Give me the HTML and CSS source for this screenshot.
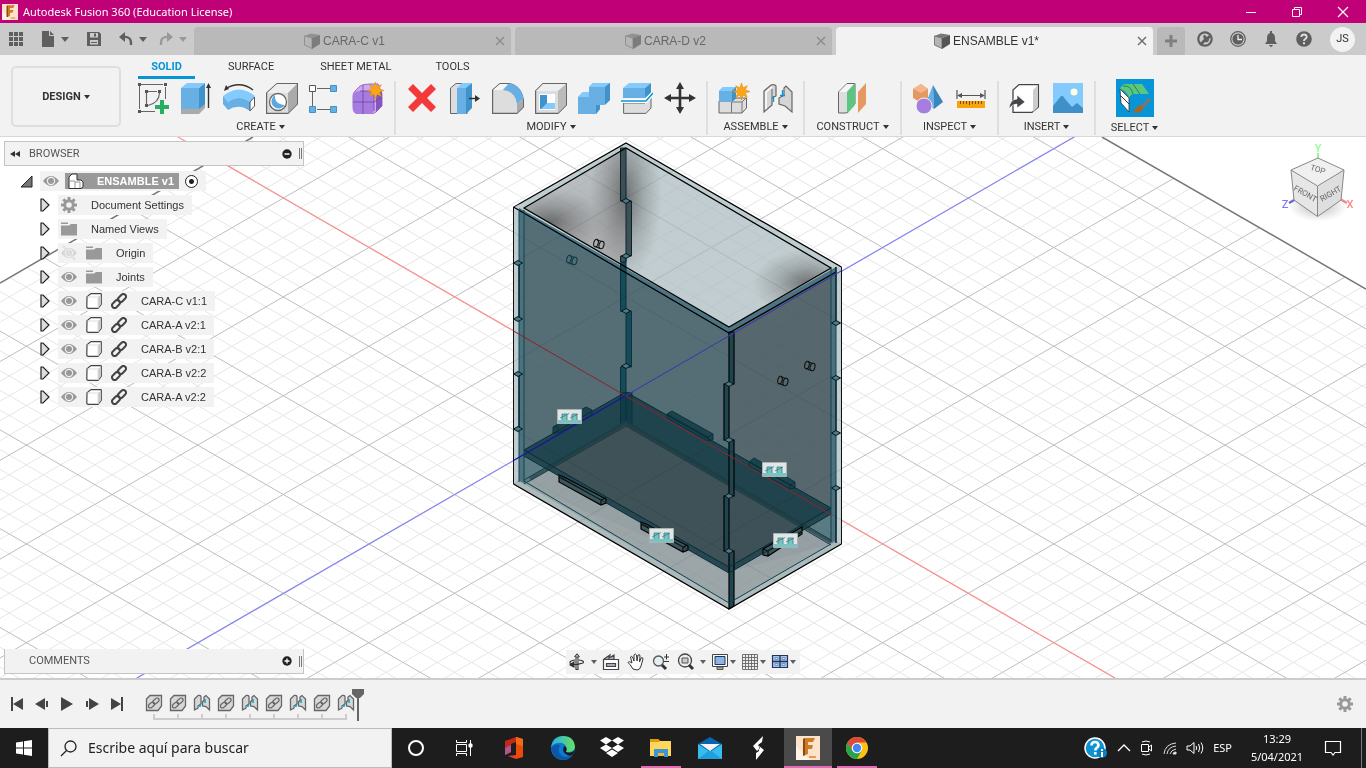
FILE: index.html
```html
<!DOCTYPE html>
<html lang="es">
<head>
<meta charset="utf-8">
<title>Autodesk Fusion 360 (Education License)</title>
<link rel="stylesheet" href="styles.css">
</head>
<body>
<svg class="defs" aria-hidden="true">
  <symbol id="tabcube" viewBox="0 0 16 16"><path d="M.5 3 8 5V15.500L.5 12Z" fill="#b4b4b4" stroke="#666" stroke-width=".8"/><path d="M0 3 7 .5 16 2 8 5Z" fill="#777"/><path d="M8 5 16 2V11L8 16Z" fill="#555"/></symbol>
  <symbol id="close" viewBox="0 0 10 10"><path d="M1 1 9 9M9 1 1 9" stroke="#707070" stroke-width="1.500"/></symbol>
  <symbol id="eye" viewBox="0 0 16 16"><path d="M0 8Q8-2 16 8Q8 18 0 8Z" fill="#999"/><circle cx="8" cy="8" r="3.600" fill="none" stroke="#f2f2f2" stroke-width="1.200"/><circle cx="8" cy="8" r="1.700" fill="#999"/></symbol>
  <symbol id="folder" viewBox="0 0 16 16"><path d="M0 1.500H7V3H0ZM0 4.500H8L10 3H16V14.500H0Z" fill="#999"/></symbol>
  <symbol id="gear" viewBox="0 0 16 16"><circle cx="8" cy="8" r="4.300" fill="none" stroke="#999" stroke-width="3"/><path d="M8 0V3M8 13V16M0 8H3M13 8H16M2.300 2.300 4.500 4.500M11.500 11.500 13.700 13.700M2.300 13.700 4.500 11.500M11.500 4.500 13.700 2.300" stroke="#999" stroke-width="3"/></symbol>
  <symbol id="cube" viewBox="0 0 16 16"><path d="M1 4Q1 3 2 3L5 .6H14.500Q15.500 .6 15.500 2V11L12 15.400H2.500Q.8 15.400.8 14Z" fill="#fff" stroke="#444" stroke-width="1.200"/><path d="M12 4 15.200 1.500V11L12 15Z" fill="#c9c9cc"/><path d="M1.500 4H12V15" fill="none" stroke="#ddd"/></symbol>
  <symbol id="link" viewBox="0 0 16 16"><g fill="none" stroke="#444" stroke-width="2"><rect x="-4.500" y="-2.600" width="9" height="5.200" rx="2.600" transform="translate(11 5) rotate(-45)"/><rect x="-4.500" y="-2.600" width="9" height="5.200" rx="2.600" transform="translate(5 11) rotate(-45)"/></g></symbol>
  <symbol id="open" viewBox="0 0 10 14"><path d="M1 1H3L9 7 3 13H1Z" fill="#ddd" stroke="#222" stroke-width="1.200"/></symbol>
  <symbol id="tl-link" viewBox="0 0 18 18"><path d="M1.500 5 5 1.500H16.500V12L13 16.500H1.500Z" fill="#d7d7d7" stroke="#666" stroke-width="1.300"/><g fill="none" stroke="#666" stroke-width="1.200"><rect x="-3.500" y="-2" width="7" height="4" rx="2" transform="translate(11 7) rotate(-40)"/><rect x="-3.500" y="-2" width="7" height="4" rx="2" transform="translate(6.500 11) rotate(-40)"/></g></symbol>
  <symbol id="tl-joint" viewBox="0 0 18 18"><path d="M1.500 16V5L5 1.500Q8 1 8 3V10L5 12V14ZM16.500 16V5L13 1.500 11 3V6L9.500 8V12L13 12.500Z" fill="#d7d7d7" stroke="#666" stroke-width="1.300"/><path d="M7 10V13M12 5V9" stroke="#0696d7" stroke-width="1.500"/></symbol>
  <symbol id="joint" viewBox="0 0 32 32"><path d="M3 30V9L10 3Q14 2 15 4V14L11 16V23Z" fill="#d5d5d5" stroke="#666" stroke-width="1.200"/><path d="M5 27V10L11 5" stroke="#fff" stroke-width="1.500" fill="none"/><path d="M11 7V16" stroke="#666"/><path d="M31 30V10L25 4 23 6V13L18 16V22L24 24Z" fill="#d5d5d5" stroke="#666" stroke-width="1.200"/><path d="M12.500 14V20M21.500 8V15M19 13.500H24" stroke="#0696d7" stroke-width="1.300"/></symbol>
  <symbol id="star" viewBox="0 0 16 16"><path d="M8 0 9.500 4.500 13.500 2.500 11.500 6.500 16 8 11.500 9.500 13.500 13.500 9.500 11.500 8 16 6.500 11.500 2.500 13.500 4.500 9.500 0 8 4.500 6.500 2.500 2.500 6.500 4.500Z" fill="#faa61a" stroke="#e08a00" stroke-width=".5"/></symbol>
  <symbol id="fusion" viewBox="0 0 24 24"><path d="M0 0H24V24H0Z" fill="#fde3cb"/><path d="M0 10 14 24H0Z" fill="#fff3e8"/><path d="M7 3 10 2H19L17 6H12V9H17L16 13H12V18L7 20Z" fill="#cf7c28"/><path d="M7 3 9 2V19L7 20Z" fill="#8c4a12"/><path d="M13 21H20" stroke="#e89b56" stroke-width="2"/></symbol>
</svg>

<header class="titlebar">
  <svg width="16" height="16"><use href="#fusion"/></svg>
  <h1>Autodesk Fusion 360 (Education License)</h1>
  <div class="wincontrols">
    <button aria-label="Minimize"><svg width="12" height="12"><path d="M1 6.500H11" stroke="#fff"/></svg></button>
    <button aria-label="Restore"><svg width="12" height="12" fill="none" stroke="#fff"><path d="M1.500 3.500H8.500V10.500H1.500ZM3.500 3V1.500H10.500V8.500H9"/></svg></button>
    <button aria-label="Close"><svg width="12" height="12"><path d="M1 1 11 11M11 1 1 11" stroke="#fff" stroke-width="1.200"/></svg></button>
  </div>
</header>

<nav class="docbar">
  <div class="quick">
    <button aria-label="Data panel"><svg width="16" height="16"><path d="M1 1H5V5H1ZM6 1H10V5H6ZM11 1H15V5H11ZM1 6H5V10H1ZM6 6H10V10H6ZM11 6H15V10H11ZM1 11H5V15H1ZM6 11H10V15H6ZM11 11H15V15H11Z" fill="#5f5f5f"/></svg></button>
    <button aria-label="File" class="menu"><svg width="14" height="16"><path d="M1 0H8V5H13V16H1ZM9 0 13 4H9Z" fill="#5f5f5f"/></svg></button>
    <button aria-label="Save"><svg width="16" height="16"><path d="M1 1H13L15 3V15H1Z" fill="#5f5f5f"/><path d="M4 2H12V6.500H4ZM4 9H12V13.500H4Z" fill="#cbcbcb"/><path d="M8 2.500H10V5.500H8ZM5 11H11V12H5Z" fill="#5f5f5f"/></svg></button>
    <button aria-label="Undo" class="menu"><svg width="14" height="14"><path d="M0 5 6 0V10Z" fill="#5f5f5f"/><path d="M4 5Q13 4 12 13" fill="none" stroke="#5f5f5f" stroke-width="2.200"/></svg></button>
    <button aria-label="Redo" class="menu faded"><svg width="14" height="14"><path d="M14 5 8 0V10Z" fill="#999"/><path d="M10 5Q1 4 2 13" fill="none" stroke="#999" stroke-width="2.200"/></svg></button>
  </div>
  <div class="doctabs">
    <div class="doctab"><a href="#c" class="name"><svg width="16" height="16"><use href="#tabcube"/></svg>CARA-C v1</a><button aria-label="Close CARA-C"><svg width="10" height="10"><use href="#close"/></svg></button></div>
    <div class="doctab"><a href="#d" class="name"><svg width="16" height="16"><use href="#tabcube"/></svg>CARA-D v2</a><button aria-label="Close CARA-D"><svg width="10" height="10"><use href="#close"/></svg></button></div>
    <div class="doctab active"><a href="#e" class="name"><svg width="16" height="16"><use href="#tabcube"/></svg>ENSAMBLE v1*</a><button aria-label="Close ENSAMBLE"><svg width="10" height="10"><use href="#close"/></svg></button></div>
  </div>
  <button class="newtab" aria-label="New tab"><svg width="14" height="14"><path d="M7 1V13M1 7H13" stroke="#808080" stroke-width="3"/></svg></button>
  <div class="account">
    <button aria-label="Extensions"><svg width="16" height="16"><circle cx="8" cy="8" r="6.700" fill="#cbcbcb" stroke="#5f5f5f" stroke-width="2.200"/><path d="M2 13 7 8Q5 4 8 4L10 6 12 4 14 6 12 8Q12 12 8 11L4 15Z" fill="#5f5f5f"/></svg></button>
    <button aria-label="Job status"><svg width="16" height="16"><circle cx="8" cy="8" r="7.300" fill="none" stroke="#5f5f5f" stroke-width="1.200"/><circle cx="8" cy="8" r="5.600" fill="#5f5f5f"/><path d="M8 4V8.500H12" fill="none" stroke="#eee" stroke-width="1.300"/></svg></button>
    <button aria-label="Notifications"><svg width="16" height="16"><path d="M7 0H9V2Q12 3 12 7V10L14 13H2L4 10V7Q4 3 7 2ZM6 14H10Q9 16 8 16T6 14Z" fill="#5f5f5f"/></svg></button>
    <button aria-label="Help"><svg width="16" height="16"><circle cx="8" cy="8" r="7.800" fill="#5f5f5f"/><path d="M5.300 6Q5.500 3.500 8 3.500T10.700 6Q10.700 7.300 9 8.200 8 8.800 8 10" fill="none" stroke="#ddd" stroke-width="1.900"/><path d="M7 11.200H9V13.200H7Z" fill="#ddd"/></svg></button>
    <button class="avatar">JS</button>
  </div>
</nav>

<section class="ribbon">
  <button class="workspace">DESIGN<i class="caret"></i></button>
  <div class="tools">
    <nav class="rtabs"><a href="#solid" class="on">SOLID</a><a href="#surface">SURFACE</a><a href="#sheet">SHEET METAL</a><a href="#tools">TOOLS</a></nav>
    <div class="groups">
      <div class="group">
        <div class="icons">
          <button aria-label="Create sketch"><svg width="32" height="32"><g fill="none" stroke="#666"><path d="M4 2.500H26M28.500 5V17M2.500 4V27M4 29.500H18" /><path d="M9.500 11V22M11 9.500H20M22.500 11Q22 21 11 23.500" stroke-width="1.200"/></g><path d="M1 1H4V4H1ZM27 1H30V4H27ZM1 28H4V31H1ZM8 8H11V11H8ZM21 8H24V11H21ZM8 22H11V25H8Z" fill="#555"/><path d="M23 18H27V23H32V27H27V32H23V27H18V23H23Z" fill="#27ae60"/></svg></button>
          <button aria-label="Extrude"><svg width="32" height="32"><path d="M1 26H19L25 21V26L19 32H1Z" fill="#aaa"/><path d="M1 6 7 1H25L19 6Z" fill="#83caff"/><path d="M1 6H19V27H1Z" fill="#68afe3"/><path d="M19 6 25 1V22L19 27Z" fill="#4092cb"/><path d="M28.500 5V26" stroke="#333" stroke-width="1.400"/><path d="M26 6 28.500 1 31 6Z" fill="#333"/></svg></button>
          <button aria-label="Revolve"><svg width="32" height="32"><path d="M2 7Q17-2 30 8" fill="none" stroke="#333" stroke-width="1.400"/><path d="M1 9 3 3 6 7Z" fill="#333"/><path d="M0 14Q16 1 32 14L27 20Q16 12 5 20Z" fill="#83caff"/><path d="M0 14 5 20Q16 12 27 20V29Q16 21 5 28L0 22Z" fill="#68afe3"/><path d="M27 20 31.500 15V24L27 29Z" fill="#fff" stroke="#555"/></svg></button>
          <button aria-label="Hole"><svg width="32" height="32"><path d="M.6 11 11 1.600H31.400V22L22 31.400H.6Z" fill="#ddd" stroke="#666" stroke-width="1.200"/><path d="M1 11 11 2H31L22 11Z" fill="#eee"/><path d="M22 11 31 2V22L22 31Z" fill="#aaa"/><circle cx="12" cy="20" r="8.500" fill="#fff" stroke="#666" stroke-width="1.300"/><path d="M9 13Q8 22 19 23A7.300 7.300 0 1 1 9 13Z" fill="#5ba7e0"/></svg></button>
          <button aria-label="Pattern"><svg width="32" height="32"><path d="M8 6.500H22M3.500 10V24M8 27.500H22" stroke="#666"/><path d="M.5 3.500H6.500V9.500H.5Z" fill="#fff" stroke="#555"/><path d="M21.500 3.500H27.500V9.500H21.500ZM.5 24.500H6.500V30.500H.5ZM21.500 24.500H27.500V30.500H21.500Z" fill="#68afe3" stroke="#4092cb"/></svg></button>
          <button aria-label="Create form"><svg width="32" height="32"><path d="M1 14Q1 11 3 9L8 4Q11 2 18 2H26L30 12V24L24 30Q22 32 18 32H7Q1 32 1 25Z" fill="#d0a9f5" stroke="#8556bd" stroke-width=".8"/><path d="M1 14Q2 9 8 9H17Q22 9 22 14V26Q22 32 17 32H7Q1 32 1 26Z" fill="#a87be3"/><path d="M24 13 30 9V24L24 30Z" fill="#8556bd"/><path d="M11 3V32M1 20H22L30 15M8 9H17Q22 9 22 14V29" stroke="#6d4995" stroke-width=".8" fill="none"/><use href="#star" x="15" y="0" width="17" height="17"/></svg></button>
        </div><button class="label">CREATE<i class="caret"></i></button>
      </div>
      <div class="group">
        <div class="icons">
          <button aria-label="Delete"><svg width="32" height="32"><path d="M2 7 7 2 16 11 25 2 30 7 21 16 30 25 25 30 16 21 7 30 2 25 11 16Z" fill="#f33a3a"/></svg></button>
          <button aria-label="Press pull"><svg width="32" height="32"><path d="M1.500 6 7 1.500H18V31.500H1.500Z" fill="#ddd" stroke="#666"/><path d="M8 6 13 1H23L18 6Z" fill="#83caff"/><path d="M8 6H17V32H8Z" fill="#68afe3"/><path d="M17 6 23 1V26L17 32Z" fill="#4092cb"/><path d="M20 16.500H27" stroke="#333" stroke-width="1.500"/><path d="M26 13 31 16.500 26 20Z" fill="#333"/></svg></button>
          <button aria-label="Fillet"><svg width="32" height="32"><path d="M.6 8 8 1.600H17Q29 4 31.400 18V25L25 31.400H.6Z" fill="#ddd" stroke="#666" stroke-width="1.200"/><path d="M1 8 8 2H16L10 8Z" fill="#f6f6f6"/><path d="M11 8 17 1.600Q30 4 31.500 17L25 22Q23 9 11 8Z" fill="#68afe3"/><path d="M25 22 31 18V25L25 31Z" fill="#aaa"/></svg></button>
          <button aria-label="Shell"><svg width="32" height="32"><path d="M.6 9 8 1.600H31.400V23L23 31.400H.6Z" fill="#ddd" stroke="#666" stroke-width="1.200"/><path d="M1 9 8 2H31L23 9Z" fill="#eee"/><path d="M23 9 31 2V23L23 31Z" fill="#bbb"/><path d="M4 12H20V28H4Z" fill="#fff"/><path d="M5 13H12V27H5Z" fill="#4092cb"/><path d="M6 27 12 21H20V27Z" fill="#83caff"/></svg></button>
          <button aria-label="Combine"><svg width="32" height="32"><path d="M0 15 5 10H11V5L15 1H32V18L26 23H22V27L18 32H0Z" fill="#68afe3"/><path d="M0 15 5 10H11V15ZM11 5 15 1H32L27 5Z" fill="#83caff"/><path d="M27 5 32 1V18L27 23ZM18 23H22V27L18 32Z" fill="#4092cb"/></svg></button>
          <button aria-label="Split"><svg width="32" height="32"><path d="M2.600 21H24L30 15V26L25 31.400H2.600Z" fill="#ddd" stroke="#666"/><path d="M2 6 8 1H30L24 6Z" fill="#83caff"/><path d="M2 6H24V16H2Z" fill="#68afe3"/><path d="M24 6 30 1V11L24 16Z" fill="#4092cb"/><path d="M0 19H25L32 11" fill="none" stroke="#fff" stroke-width="4"/><path d="M0 19H25L32 11" fill="none" stroke="#0696d7" stroke-width="1.500"/></svg></button>
          <button aria-label="Move"><svg width="32" height="32"><path d="M16 0 20 7H17.300V14.700H25V12L32 16 25 20V17.300H17.300V25H20L16 32 12 25H14.700V17.300H7V20L0 16 7 12V14.700H14.700V7H12Z" fill="#333"/></svg></button>
        </div><button class="label">MODIFY<i class="caret"></i></button>
      </div>
      <div class="group">
        <div class="icons">
          <button aria-label="New component"><svg width="32" height="32"><path d="M1 19H14L18 16H28.500V26L24 31H1Z" fill="#ddd" stroke="#666"/><path d="M13.500 20V31M24 20V31M13 20H24L28 16" stroke="#777" fill="none"/><path d="M1 9 5 5H18V16L14 20H1Z" fill="#68afe3"/><path d="M1 9 5 5H18L14 9Z" fill="#83caff"/><path d="M14 9 18 5V16L14 20Z" fill="#4092cb"/><use href="#star" x="15" y="1" width="17" height="17"/></svg></button>
          <button aria-label="Joint"><svg width="32" height="32"><use href="#joint"/></svg></button>
        </div><button class="label">ASSEMBLE<i class="caret"></i></button>
      </div>
      <div class="group">
        <div class="icons">
          <button aria-label="Offset plane"><svg width="32" height="32"><path d="M1.500 10 10 1.500H18V22L9 31H1.500Z" fill="#ddd" stroke="#666"/><path d="M2 10 10 2H17L9 10Z" fill="#f6f6f6"/><path d="M10 10 18 1V23L10 32Z" fill="#5bc67f"/><path d="M21 10 29 1V22L21 31Z" fill="#e59862"/></svg></button>
        </div><button class="label">CONSTRUCT<i class="caret"></i></button>
      </div>
      <div class="group">
        <div class="icons">
          <button aria-label="Analysis"><svg width="32" height="32"><path d="M1 7 9 2 16 7V16L8 20 1 16Z" fill="#e59862"/><path d="M1 7 9 2 16 7 9 11Z" fill="#f5b68c"/><path d="M21 3 14 21 22 27Z" fill="#68afe3"/><path d="M21 3 31 20 22 27Z" fill="#3b85bd"/><circle cx="12" cy="24" r="8" fill="#a87de0" stroke="#f2f2f2"/></svg></button>
          <button aria-label="Measure"><svg width="32" height="32"><path d="M2 8V17M30 8V17M4 13.500H28" stroke="#555" stroke-width="1.200"/><path d="M2 13.500 7 11V16ZM30 13.500 25 11V16Z" fill="#555"/><path d="M2 19H30V26H2Z" fill="#f9a30c"/><path d="M5.500 19V22M8.500 19V22M11.500 19V22M14.500 19V23M17.500 19V22M20.500 19V22M23.500 19V22M26.500 19V22" stroke="#7b5000"/></svg></button>
        </div><button class="label">INSPECT<i class="caret"></i></button>
      </div>
      <div class="group">
        <div class="icons">
          <button aria-label="Insert derive"><svg width="32" height="32"><path d="M4 8 10 2.600H29.400V25L23 30.400H4Z" fill="#fff" stroke="#444" stroke-width="1.300"/><path d="M24 8 29 3V25L24 30Z" fill="#ccc"/><path d="M0 27Q1 17 8 17V13L16 20 8 26V22Q3 22 0 27Z" fill="#45464c" stroke="#fff" stroke-width=".6"/></svg></button>
          <button aria-label="Canvas"><svg width="32" height="32"><path d="M1 1H31V31H1Z" fill="#83caff"/><path d="M1 24 9 14Q11 13 13 17L20 25 25 21 31 26V31H1Z" fill="#3f90c9"/><circle cx="22" cy="10" r="3.500" fill="#fffde0"/></svg></button>
        </div><button class="label">INSERT<i class="caret"></i></button>
      </div>
      <div class="group last">
        <div class="icons">
          <button aria-label="Select" class="selected"><svg width="32" height="32"><path d="M1 7 10 16V30L2 21Z" fill="#fff" stroke="#333" stroke-width=".8"/><path d="M2 14 10 22" stroke="#333"/><path d="M1 7Q3 2 7 2H23L30 12H15Q12 12 10 16 8 9 1 7Z" fill="#5bc67f"/><path d="M14 2 21 12M4 4Q12 3 14 12" stroke="#22874a" fill="none"/><path d="M31 17 23 25" stroke="#777" stroke-width="3.500"/><path d="M14 31Q17 24 21 23L25 26Q23 31 14 31Z" fill="#a0682c"/></svg></button>
        </div><button class="label">SELECT<i class="caret"></i></button>
      </div>
    </div>
  </div>
</section>

<main class="canvas">
  <svg class="scene" viewBox="0 137 1366 541" preserveAspectRatio="xMidYMid slice" role="img" aria-label="Box assembly">
    <defs>
      <clipPath id="plane"><path d="M0 283 474 9 627 -137 1366 289V700H0Z"/></clipPath>
      <clipPath id="body"><path d="M513.500 207 626 143 841.500 267V544L729 609 513.500 484Z"/></clipPath>
      <linearGradient id="lw" gradientUnits="userSpaceOnUse" x1="560" y1="180" x2="590" y2="235"><stop offset="0" stop-color="#b9bec1"/><stop offset="1" stop-color="#adafb1"/></linearGradient>
      <radialGradient id="dk"><stop offset="0" stop-color="#4c4c4c" stop-opacity=".7"/><stop offset=".5" stop-color="#555" stop-opacity=".3"/><stop offset="1" stop-color="#666" stop-opacity="0"/></radialGradient>
      <clipPath id="mouth"><path d="M524 208 626 148 831 268 729 327Z"/></clipPath>
      <symbol id="tag" viewBox="0 0 25 15"><path d="M.5.500H24.500V14.500H.5Z" fill="#e0e5e6" stroke="#aab2b4"/><path d="M1 11H5V5H10V11H15V5H20V11H24V14H1Z" fill="#79c3c3"/><path d="M5 11V5H10V11M15 11V5H20V11M3 9 12 4.500M13 9 21 5" fill="none" stroke="#2a7479" stroke-width=".7"/></symbol>
      <symbol id="pin" viewBox="0 0 14 12"><g fill="none" stroke="currentColor" stroke-width="1.100"><ellipse cx="4" cy="5" rx="2.200" ry="3.800" transform="rotate(15 4 5)"/><ellipse cx="9.500" cy="7" rx="2.400" ry="3.800" transform="rotate(15 9.500 7)"/><path d="M5 2 10 3.500M3 8.500 8 10.500"/></g></symbol>
      <symbol id="dia" viewBox="0 0 10 6"><path d="M.5 3 5 .5 9.500 3 5 5.500Z" fill="#4e7985" stroke="#001a20"/></symbol>
    </defs>
    <g clip-path="url(#plane)"><path id="minor" class="minor"/><path id="major" class="major"/></g>
    <path d="M0 283 253 137M1102 137 1366 289" stroke="#777" stroke-width="1.500"/>
    <path d="M178 137 1115 678" stroke="#ff9191" stroke-width="1.200"/>
    <path d="M137 678 1075 136.500" stroke="#8888f6" stroke-width="1.200"/>

    <g fill-opacity=".95">
      <path d="M513.500 207 626 143 841.500 267V544L729 609 513.500 484Z" fill="#bccacf"/>
      <path d="M524 208 626 148V267Z" fill="url(#lw)"/>
      <path d="M626 148 831 268 729 327 626 267Z" fill="#c1ccd0"/>
    </g>
    <g clip-path="url(#mouth)">
      <ellipse cx="550" cy="222" rx="55" ry="34" fill="url(#dk)"/>
      <ellipse cx="626" cy="195" rx="36" ry="85" fill="url(#dk)"/>
      <ellipse cx="808" cy="283" rx="56" ry="34" fill="url(#dk)"/>
    </g>
    <g fill-opacity=".95">
      <path d="M519 208 729 330V572L519 482Z" fill="#4f6870"/>
      <path d="M729 330 836 269V543L729 572Z" fill="#506268"/>
      <path d="M524 450 626 392V424L548 469Z" fill="#1f434d"/>
      <path d="M626 392 831 508V514L804 528 626 425Z" fill="#1e414b"/>
      <path d="M548 469 626 424 804 528 729 570Z" fill="#3d5056"/>
      <path d="M513.500 484 519 480 524 483 548 469 729 572 804 528 836 545 841 544 729 609Z" fill="#9aa3a6"/>
      <path d="M519 450 548 469 524 484 519 481ZM836 509 804 528 836 546Z" fill="#5c7c85"/>
      <path d="M524 450 729 567 831 508V514L729 573 524 456Z" fill="#26464f"/>
      <path d="M513.500 484 519 481 729 603V609ZM729 603 836 541 841 544 729 609Z" fill="#aebabd"/>
    </g>
    <path d="M519 208 729 327 836 267V273L729 333 519 214Z" fill="#4c7482"/>
    <path d="M519 210H524V481H519ZM831 269H836V541H831Z" fill="#4b737f" fill-opacity=".85"/>
    <path d="M626 421 524 480M626 426 524 484M626 421 831 540M626 426 831 545" stroke="#0d434e"/>
    <path d="M626 424 530 479M626 424 831 542" stroke="#24383d" stroke-width="4" opacity=".6"/>
    <path d="M620.500 262H626V312H631.500V367H626V395H620.500V367H626V312H620.500Z" fill="#174b57"/>
    <path d="M626 392H632V424L626 421 620 424V392Z" fill="#113c46"/>
    <path d="M620.500 148H626V201H631.500V256H626V262H620.500V256H626V201H620.500Z" fill="#3f4f54" stroke="#06262e"/>
    <path d="M620.500 263V311H626V367H620.500V424M631.500 311V367H626M626 256V311H631.500M626 367V421M632 392V424" stroke="#06333e" fill="none"/>
    <g clip-path="url(#body)" class="veil"><use href="#minor"/><use href="#major"/><use href="#major"/></g>
    <path d="M729 332H734V384H729ZM724 384H729V440H724ZM729 440H734V496H729ZM724 496H729V551H724ZM729 551H734V606L729 609Z" fill="#1f4650" stroke="#000" stroke-width="1.200"/>

    <path d="M553 427 586 407 592 410V415L558 433H553ZM667 414 672 411 713 434V440L708 441 667 418ZM749 462 754 458 795 482V488L790 489 749 466Z" fill="#1d424c" stroke="#06333e"/>
    <path d="M558 432V427L553 427M667 414 708 437 713 434M708 437V441M749 462 790 485 795 482M790 485V489" fill="none" stroke="#06333e"/>
    <path d="M559 475 564 477 606 499V503L601 505 559 482ZM641 522 646 524 688 546V550L683 552 641 529ZM763 549 802 527V534L768 556 763 555Z" fill="#3f545a" stroke="#000" stroke-width="1.200"/>
    <path d="M559 477 601 500 606 498M601 500V505M641 524 683 547 688 545M683 547V552M763 549 768 551 802 532M768 551V556" fill="none" stroke="#000"/>
    <path d="M524 450 729 567 831 508M524 456 729 573 831 514M524 450 626 392 831 508" fill="none" stroke="#062d36"/>

    <g fill="none" stroke="#000" stroke-width="1.300">
      <path d="M519 204 626 143 841.500 267M513.500 484 729 609 841.500 544"/>
      <path d="M524 208 626 148 831 268 729 327ZM513.500 207 729 333 836 272"/>
      <path d="M519 263V318M519 374V429M836 267V322M836 378V433M836 488V543"/>
    </g>
    <path d="M519 204 513.500 207V484M841.500 267V544" fill="none" stroke="#111"/>
    <path d="M519 210V482M524 210V482M831 269V542M836 269V542M524 481 729 603 831 544" fill="none" stroke="#10434f"/>
    <use href="#dia" x="513" y="260" width="10" height="6"/><use href="#dia" x="513" y="316" width="10" height="6"/><use href="#dia" x="513" y="371" width="10" height="6"/><use href="#dia" x="513" y="426" width="10" height="6"/>
    <use href="#dia" x="831" y="320" width="10" height="6"/><use href="#dia" x="831" y="375" width="10" height="6"/><use href="#dia" x="831" y="430" width="10" height="6"/><use href="#dia" x="831" y="485" width="10" height="6"/>
    <use href="#dia" x="621" y="198" width="10" height="6"/><use href="#dia" x="621" y="253" width="10" height="6"/><use href="#dia" x="621" y="308" width="10" height="6"/><use href="#dia" x="621" y="363" width="10" height="6"/>
    <use href="#dia" x="724" y="381" width="10" height="6"/><use href="#dia" x="724" y="437" width="10" height="6"/><use href="#dia" x="724" y="493" width="10" height="6"/><use href="#dia" x="724" y="548" width="10" height="6"/>
    <path d="M513.500 331 831 514.500" stroke="#8e2630"/>
    <path d="M513.500 460.500 626 395.500" stroke="#1515a0" stroke-width="1.200"/><path d="M626 395.500 841 271" stroke="#3838b8"/>
    <g color="#0b3a44"><use href="#pin" x="592" y="238" width="14" height="12" color="#111"/><use href="#pin" x="565" y="254" width="14" height="12"/><use href="#pin" x="803" y="360" width="14" height="12" color="#111"/><use href="#pin" x="776" y="375" width="14" height="12" color="#111"/></g>
    <use href="#tag" x="557" y="409" width="25" height="15"/><use href="#tag" x="762" y="462" width="25" height="15"/><use href="#tag" x="649" y="528" width="25" height="15"/><use href="#tag" x="773" y="533" width="25" height="15"/>
  </svg>

  <svg class="viewcube" width="80" height="84" viewBox="1278 140 80 84" aria-label="View cube">
    <defs><radialGradient id="sh"><stop offset="0" stop-color="#777" stop-opacity=".6"/><stop offset="1" stop-color="#aaa" stop-opacity="0"/></radialGradient></defs>
    <ellipse cx="1318" cy="206" rx="30" ry="16" fill="url(#sh)"/>
    <path d="M1318 153V160" stroke="#8f8" stroke-width="2"/><path d="M1289 203 1296 199" stroke="#66d" stroke-width="2.500"/><path d="M1340 199 1347 203" stroke="#e88" stroke-width="2.500"/>
    <path d="M1291 170 1318 158 1344 170 1317.500 186Z" fill="#f0f0f0"/><path d="M1291 170 1317.500 186V216.500L1294 200Z" fill="#e6e6e6"/><path d="M1344 170 1317.500 186V216.500L1341 200Z" fill="#dedede"/>
    <path d="M1291 170 1318 158 1344 170 1341 200 1317.500 216.500 1294 200ZM1291 170 1317.500 186 1344 170M1317.500 186V216" fill="none" stroke="#888"/>
    <g class="facetext"><text transform="translate(1317 172) rotate(18)">TOP</text><text transform="translate(1304 196) rotate(30)">FRONT</text><text transform="translate(1332 196) rotate(-30)">RIGHT</text></g>
    <g class="axistext"><text x="1318" y="152" fill="#8dff8d">Y</text><text x="1285" y="208" fill="#7a7aff">Z</text><text x="1350" y="208" fill="#ff8585">X</text></g>
  </svg>

  <div class="overlay">
    <aside class="browser">
      <div class="panel top"><button aria-label="Collapse"><svg width="12" height="8"><path d="M6 1V7L1 4ZM11 1V7L6 4Z" fill="#333"/></svg></button><h2>BROWSER</h2><button aria-label="Hide"><svg width="10" height="10"><circle cx="5" cy="5" r="4.700" fill="#222"/><path d="M2.500 5H7.500" stroke="#fff" stroke-width="1.500"/></svg></button><i class="grip"></i></div>
      <ul class="tree">
        <li class="root"><svg width="13" height="13"><path d="M12 1V12H1Z" fill="#777" stroke="#222"/></svg><div class="chip"><svg width="16" height="16"><use href="#eye"/></svg><span class="sel"><svg width="16" height="16"><path d="M1 4 4 1H9V7H13L15 9V14L13 15.500H1Z" fill="#fff" stroke="#333"/><path d="M1 8H7V15M7 9H12V15" fill="none" stroke="#999"/></svg><b>ENSAMBLE v1</b></span><input type="radio" checked aria-label="Activate component"></div></li>
        <li><svg width="10" height="14"><use href="#open"/></svg><div class="chip"><svg width="16" height="16"><use href="#gear"/></svg><span>Document Settings</span></div></li>
        <li><svg width="10" height="14"><use href="#open"/></svg><div class="chip"><svg width="16" height="16"><use href="#folder"/></svg><span>Named Views</span></div></li>
        <li><svg width="10" height="14"><use href="#open"/></svg><div class="chip"><svg class="off" width="16" height="16"><use href="#eye"/><path d="M2 1 14 15" stroke="#bbb" stroke-width="2"/></svg><svg width="16" height="16"><use href="#folder"/></svg><span>Origin</span></div></li>
        <li><svg width="10" height="14"><use href="#open"/></svg><div class="chip"><svg width="16" height="16"><use href="#eye"/></svg><svg width="16" height="16"><use href="#folder"/></svg><span>Joints</span></div></li>
        <li><svg width="10" height="14"><use href="#open"/></svg><div class="chip"><svg width="16" height="16"><use href="#eye"/></svg><svg width="16" height="16"><use href="#cube"/></svg><svg width="16" height="16"><use href="#link"/></svg><span>CARA-C v1:1</span></div></li>
        <li><svg width="10" height="14"><use href="#open"/></svg><div class="chip"><svg width="16" height="16"><use href="#eye"/></svg><svg width="16" height="16"><use href="#cube"/></svg><svg width="16" height="16"><use href="#link"/></svg><span>CARA-A v2:1</span></div></li>
        <li><svg width="10" height="14"><use href="#open"/></svg><div class="chip"><svg width="16" height="16"><use href="#eye"/></svg><svg width="16" height="16"><use href="#cube"/></svg><svg width="16" height="16"><use href="#link"/></svg><span>CARA-B v2:1</span></div></li>
        <li><svg width="10" height="14"><use href="#open"/></svg><div class="chip"><svg width="16" height="16"><use href="#eye"/></svg><svg width="16" height="16"><use href="#cube"/></svg><svg width="16" height="16"><use href="#link"/></svg><span>CARA-B v2:2</span></div></li>
        <li><svg width="10" height="14"><use href="#open"/></svg><div class="chip"><svg width="16" height="16"><use href="#eye"/></svg><svg width="16" height="16"><use href="#cube"/></svg><svg width="16" height="16"><use href="#link"/></svg><span>CARA-A v2:2</span></div></li>
      </ul>
    </aside>
    <div class="bottomrow">
      <div class="panel comments"><h2>COMMENTS</h2><button aria-label="Add comment"><svg width="10" height="10"><circle cx="5" cy="5" r="4.700" fill="#222"/><path d="M2.500 5H7.500M5 2.500V7.500" stroke="#fff" stroke-width="1.300"/></svg></button><i class="grip"></i></div>
      <div class="navbar">
        <button aria-label="Orbit" class="menu wide"><svg width="18" height="18" fill="none" stroke="#333" stroke-width="1.100"><path d="M8 16.500V4H10V16.500ZM6.500 4 9 1 11.500 4M7 7Q1 8 2 10 5 13 15 10 17 8 11 7"/><path d="M6 9 2 12 6 14Z" fill="#333"/></svg></button>
        <button aria-label="Look at"><svg width="18" height="18" fill="none" stroke="#444" stroke-width="1.200"><path d="M1.500 6.500H16.500V16.500H1.500Z" fill="#fff"/><path d="M4.500 10.500H13.500V13.500H4.500ZM2 6 8 2 7 5 12 2V6" fill="#aab"/></svg></button>
        <button aria-label="Pan"><svg width="18" height="18"><path d="M6 16Q3 11 1 9.500 2 7.500 5 10L3.500 4Q4.500 2 6 5L7 8 7 2Q8.500 0 9.500 2L10 8 11 2Q13 1 13 3L12.500 9 14 5Q16 4 16 6L14 13Q13 17 10 17Z" fill="#fff" stroke="#333"/></svg></button>
        <button aria-label="Zoom"><svg width="18" height="18" fill="none"><circle cx="6.500" cy="8" r="5" fill="#e5eff3" stroke="#555" stroke-width="1.300"/><path d="M10 12 14 16" stroke="#333" stroke-width="3"/><path d="M12 4H17M14.500 1V6.500M12 8.500H17" stroke="#333"/></svg></button>
        <button aria-label="Fit" class="menu wide"><svg width="18" height="18" fill="none"><circle cx="8" cy="7.500" r="6.500" fill="#eee" stroke="#444" stroke-width="1.300"/><path d="M5 5H11V10H5Z" fill="#ccc" stroke="#555"/><path d="M12 12 16 16" stroke="#333" stroke-width="3"/></svg></button>
        <button aria-label="Display" class="menu"><svg width="18" height="18"><path d="M1.500 1.500H16.500V13.500H1.500Z" fill="#fff" stroke="#444"/><path d="M4 3.500H14V11.500H4Z" fill="#8fb5e5" stroke="#22345e"/><path d="M6 14H12V16.500H6Z" fill="#aaa" stroke="#555"/></svg></button>
        <button aria-label="Grid" class="menu"><svg width="18" height="18"><path d="M1.500 1.500H16.500V16.500H1.500ZM4.500 1V17M7.500 1V17M10.500 1V17M13.500 1V17M1 4.500H17M1 7.500H17M1 10.500H17M1 13.500H17" fill="#eee" stroke="#666" stroke-width=".9"/></svg></button>
        <button aria-label="Viewports" class="menu"><svg width="18" height="18"><path d="M1.500 2.500H16.500V14.500H1.500Z" fill="#a9c6eb" stroke="#22345e" stroke-width="1.200"/><path d="M9 2V15M1 8.500H17" stroke="#22345e" stroke-width="1.400"/><path d="M4 4.500H7V6.500H4ZM11 4.500H14V6.500H11ZM4 10.500H7V12.500H4ZM11 10.500H14V12.500H11Z" fill="#d5e4f8" stroke="#6f91bd"/></svg></button>
      </div>
    </div>
  </div>
</main>

<section class="timeline">
  <div class="playback">
    <button aria-label="First"><svg width="14" height="16"><path d="M2 1V15" stroke="#444" stroke-width="2"/><path d="M13 2V14L3 8Z" fill="#444"/></svg></button>
    <button aria-label="Previous"><svg width="14" height="16"><path d="M10 2V14L0 8Z" fill="#444"/><path d="M12 5V11" stroke="#444" stroke-width="2"/></svg></button>
    <button aria-label="Play"><svg width="14" height="16"><path d="M1 1V15L13 8Z" fill="#444"/></svg></button>
    <button aria-label="Next"><svg width="14" height="16"><path d="M2 5V11" stroke="#444" stroke-width="2"/><path d="M4 2V14L14 8Z" fill="#444"/></svg></button>
    <button aria-label="Last"><svg width="14" height="16"><path d="M1 2V14L11 8Z" fill="#444"/><path d="M12 1V15" stroke="#444" stroke-width="2"/></svg></button>
  </div>
  <ol class="features">
    <li><svg width="18" height="18"><use href="#tl-link"/></svg></li><li><svg width="18" height="18"><use href="#tl-link"/></svg></li><li><svg width="18" height="18"><use href="#tl-joint"/></svg></li><li><svg width="18" height="18"><use href="#tl-link"/></svg></li><li><svg width="18" height="18"><use href="#tl-joint"/></svg></li><li><svg width="18" height="18"><use href="#tl-link"/></svg></li><li><svg width="18" height="18"><use href="#tl-joint"/></svg></li><li><svg width="18" height="18"><use href="#tl-link"/></svg></li><li><svg width="18" height="18"><use href="#tl-joint"/></svg></li>
  </ol>
  <svg class="marker" width="12" height="32"><path d="M0 0H12V5L8 9H4L0 5Z" fill="#666"/><path d="M6 5V32" stroke="#666" stroke-width="2"/></svg>
  <button class="settings" aria-label="Settings"><svg width="16" height="16"><use href="#gear"/></svg></button>
</section>

<footer class="taskbar">
  <button class="start" aria-label="Inicio"><svg width="16" height="16"><path d="M0 2.500 7 1.500V7.500H0ZM8 1.300 16 0V7.500H8ZM0 8.500H7V14.500L0 13.500ZM8 8.500H16V16L8 14.700Z" fill="#fff"/></svg></button>
  <label class="search"><svg width="17" height="17"><circle cx="10.500" cy="6.500" r="5.500" fill="none" stroke="#222" stroke-width="1.300"/><path d="M6.500 10.500 1 16" stroke="#222" stroke-width="1.300"/></svg><input type="text" placeholder="Escribe aquí para buscar" aria-label="Buscar"></label>
  <div class="apps">
    <button aria-label="Cortana"><svg width="24" height="24"><circle cx="12" cy="12" r="7" fill="none" stroke="#fff" stroke-width="2"/></svg></button>
    <button aria-label="Task view"><svg width="24" height="24" fill="none" stroke="#fff"><path d="M3.500 8.500H13.500V15.500H3.500ZM3.500 4V6.500H13.500V4M3.500 20V17.500H13.500V20M17.500 4V20"/><path d="M16 8H19V11H16Z" fill="#fff"/></svg></button>
    <button aria-label="Office"><svg width="24" height="24"><path d="M3 5 14 1V6L9 8V16L3 19Z" fill="#c4281b"/><path d="M3 12 9 9V16L3 19Z" fill="#b3568b"/><path d="M14 1 21 3V21L14 23Z" fill="#eb4b0a"/><path d="M14 1 21 3V10L14 8Z" fill="#f36b16"/><path d="M6 20 14 19V23Z" fill="#ef3e2d"/></svg></button>
    <button aria-label="Edge"><svg width="24" height="24"><defs><linearGradient id="eg"><stop stop-color="#2aaee8"/><stop offset="1" stop-color="#64e060"/></linearGradient></defs><circle cx="12" cy="12" r="12" fill="#0f78d1"/><path d="M0 11Q2 0 12 0 23 0 24 11 23 17 15 16 17 9 11 7 4 6 0 11Z" fill="url(#eg)"/><path d="M13 10Q17 11 15 16 20 18 24 14 23 18 20 20 13 19 12 14Z" fill="#1b1b1b"/><path d="M9 9Q5 18 14 21 18 21 21 19 17 24 12 24 2 23 0 12 4 7 9 9Z" fill="#0b57a8"/></svg></button>
    <button aria-label="Dropbox"><svg width="24" height="24"><path d="M6 1 12 4.500 6 8.500 0 4.500ZM18 1 24 4.500 18 8.500 12 4.500ZM0 12 6 8.500 12 12 6 16ZM12 12 18 8.500 24 12 18 16ZM6 17 12 13.500 18 17 12 21Z" fill="#fff"/></svg></button>
    <button aria-label="Explorer" class="running"><svg width="24" height="24"><path d="M1 3H9L11 5H22V20H1Z" fill="#ffd65c"/><path d="M1 3H9L11 5 10 6H1Z" fill="#e09b0b"/><path d="M5 13H19V21H15V17H9V21H5Z" fill="#3c96d4"/><path d="M9 17H15V20H9Z" fill="#f3b63c"/></svg></button>
    <button aria-label="Mail"><svg width="24" height="24"><path d="M0 8 12 1 24 8V22H0Z" fill="#0b63b0"/><path d="M0 8 12 16 24 8V23H0Z" fill="#35bdf0"/><path d="M0 23 12 14 24 23Z" fill="#1f9ee0"/><path d="M2 8H22L12 15Z" fill="#f4f4f4"/></svg></button>
    <button aria-label="Smart"><svg width="24" height="24"><path d="M16 0 6 10 10 15 13 12 11 9 15 6ZM12 10 17 14 9 24 9 17 12 15Z" fill="#fff"/></svg></button>
    <button aria-label="Fusion 360" class="running current"><svg width="24" height="24"><use href="#fusion"/></svg></button>
    <button aria-label="Chrome" class="running"><svg width="24" height="24"><circle cx="12" cy="12" r="11" fill="#fbc116"/><path d="M2.500 6.500A11 11 0 0 1 21.500 6.500H12L7 14Z" fill="#e0483a"/><path d="M2.500 6.500A11 11 0 0 0 12 23L17 14 7 14Z" fill="#2aa34f"/><circle cx="12" cy="12" r="5.300" fill="#fff"/><circle cx="12" cy="12" r="4.200" fill="#4487f4"/></svg></button>
  </div>
  <div class="tray">
    <button aria-label="Soporte"><svg width="24" height="22"><circle cx="11" cy="11" r="10" fill="#0d93d2" stroke="#fff" stroke-width="1.500"/><path d="M7.500 8.500Q7.500 5 11 5T14.500 8.500Q14 10 12.500 11 11.300 12 11.300 13.500" fill="none" stroke="#fff" stroke-width="2.600"/><path d="M10 15H12.600V17.600H10Z" fill="#fff"/><circle cx="18" cy="16" r="5" fill="#0a80c0"/><path d="M17 15H19V20H17ZM17 12H19V14H17Z" fill="#fff"/></svg></button>
    <button aria-label="Más iconos"><svg width="14" height="16"><path d="M1 11 7 5 13 11" fill="none" stroke="#fff" stroke-width="1.300"/></svg></button>
    <button aria-label="Cámara"><svg width="14" height="16" fill="none" stroke="#fff"><path d="M1.500 4.500H8.500V11.500H1.500ZM9 7 11.500 5V11L9 9M2 2Q6 0 10 2M2 14Q6 16 10 14"/></svg></button>
    <button aria-label="Red"><svg width="14" height="16" fill="none" stroke="#ddd"><path d="M1 14Q2 4 13 3M4 14Q5 7 13 6M7 14Q8 10 13 9"/><path d="M10 14Q10 12 13 12V14Z" fill="#fff"/></svg></button>
    <button aria-label="Volumen"><svg width="18" height="16" fill="none" stroke="#fff"><path d="M1 6H4L8 2.500V13.500L4 10H1ZM10 6Q11.500 8 10 10M12.500 4Q15 8 12.500 12M15 2.500Q18.500 8 15 13.500"/></svg></button>
    <span class="lang">ESP</span>
    <time class="clock"><span>13:29</span><span>5/04/2021</span></time>
    <button class="notify" aria-label="Notificaciones"><svg width="18" height="18" fill="none" stroke="#fff" stroke-width="1.200"><path d="M1.500 2.500H16.500V13.500H11L9 16 7 13.500H1.500Z"/></svg></button>
    <i class="peek"></i>
  </div>
</footer>
<script src="grid.js"></script>
</body>
</html>
```

FILE: grid.js
```js
// Isometric ground grid: two line families crossing at the model origin.
const ORIGIN = { x: 625.7, y: 395.7 };
const STEP = 19.76;
const SLOPE = 0.577;

function line(k, sign) {
  const at = x => ORIGIN.y + k * STEP + sign * SLOPE * (x - ORIGIN.x);
  return `M-20 ${at(-20).toFixed(1)}L1386 ${at(1386).toFixed(1)}`;
}

let minor = "";
let major = "";
for (let k = -24; k <= 50; k++) {
  if (k % 5) minor += line(k, -1); else major += line(k, -1);
}
for (let k = -27; k <= 50; k++) {
  if (k % 5) minor += line(k, 1); else major += line(k, 1);
}
document.getElementById("minor").setAttribute("d", minor);
document.getElementById("major").setAttribute("d", major);
```

FILE: styles.css
```css
* { box-sizing: border-box; }
body {
  margin: 0;
  height: 100vh;
  display: flex;
  flex-direction: column;
  overflow: hidden;
  font: 11px/16px Roboto, "Liberation Sans", sans-serif;
  color: #333;
  background: #f2f2f2;
}
button {
  border: 0;
  padding: 0;
  background: none;
  color: inherit;
  font: inherit;
  display: flex;
  align-items: center;
  justify-content: center;
}
svg { display: block; flex: none; }
a { color: inherit; text-decoration: none; }
ul, ol { list-style: none; margin: 0; padding: 0; }
h1, h2 { margin: 0; font-weight: 400; }
.defs { position: absolute; width: 0; height: 0; }
.caret {
  border: 3px solid transparent;
  border-top: 4px solid #333;
  border-bottom: 0;
  margin-left: 3px;
}

.titlebar {
  display: flex;
  align-items: center;
  height: 23px;
  flex: none;
  padding-left: 2px;
  background: #bf0077;
  color: #fff;
}
.titlebar h1 { margin-left: 5px; font: 11px/20px "Noto Sans", sans-serif; }
.wincontrols { display: flex; margin-left: auto; }
.wincontrols button { width: 46px; height: 20px; }

.docbar {
  display: flex;
  align-items: flex-end;
  height: 32px;
  flex: none;
  background: #cbcbcb;
}
.quick { display: flex; align-items: center; width: 194px; height: 32px; padding-left: 8px; gap: 17px; }
.menu::after {
  content: "";
  border: 4px solid transparent;
  border-top: 5px solid #5f5f5f;
  border-bottom: 0;
  margin-left: 6px;
}
.quick .faded { margin-left: -5px; }
.quick .faded::after { border-top-color: #999; }
.doctabs { flex: 1; display: flex; gap: 4px; }
.doctab {
  flex: 1;
  display: flex;
  align-items: center;
  height: 28px;
  padding-right: 6px;
  border-radius: 4px 4px 0 0;
  background: #b9b9b9;
  color: #686868;
  font: 12px/16px "Liberation Sans", sans-serif;
}
.doctab .name { flex: 1; display: flex; justify-content: center; gap: 3px; }
.doctab svg { opacity: .6; }
.doctab.active svg { opacity: 1; }
.doctab.active { background: #f2f2f2; color: #333; }
.newtab { width: 28px; height: 28px; margin-left: 4px; background: #b9b9b9; border-radius: 4px 4px 0 0; }
.account { display: flex; align-items: center; height: 32px; gap: 17px; padding: 0 11px 0 12px; }
.avatar { width: 25px; height: 25px; border-radius: 50%; background: #f2f2f2; margin-left: 1px; }

.ribbon {
  display: flex;
  flex: none;
  height: 82px;
  border-bottom: 1px solid #d8d8d8;
}
.workspace {
  width: 110px;
  height: 61px;
  margin: 11px 16px 0 11px;
  border: 2px solid #dedede;
  border-radius: 5px;
  font-weight: 700;
}
.tools { flex: 1; }
.rtabs { display: flex; height: 24px; }
.rtabs a { padding: 4px 0 0; margin-right: 46px; }
.rtabs .on {
  width: 57px;
  margin: 0 33px 0 1px;
  text-align: center;
  color: #0696d7;
  font-weight: 700;
  border-bottom: 3px solid #0696d7;
}
.rtabs a:nth-child(3) { margin-right: 44px; }
.groups { display: flex; height: 54px; margin-top: 2px; }
.group {
  min-width: 97px;
  padding: 0 10px;
  border-right: 2px solid #dedede;
  display: flex;
  flex-direction: column;
  align-items: center;
}
.group:first-child { padding-left: 0; }
.group.last { border: 0; min-width: 77px; }
.icons { display: flex; gap: 11px; height: 34px; align-items: center; }
.selected { width: 38px; height: 38px; background: #0696d7; }
.label { margin-top: 5px; height: 16px; }

.canvas { position: relative; flex: 1; background: #fff; overflow: hidden; }
.scene { position: absolute; inset: 0; width: 100%; height: 100%; }
.minor, .major { fill: none; }
.minor { stroke: #e6e6e6; }
.major { stroke: #bdbdbd; }
.veil { opacity: .3; mix-blend-mode: multiply; }
.viewcube { position: absolute; top: 3px; right: 8px; }
.facetext { font: 8px Roboto, sans-serif; fill: #666; text-anchor: middle; }
.axistext { font: 500 11px Roboto, sans-serif; text-anchor: middle; }
.overlay {
  position: relative;
  height: 100%;
  padding: 4px;
  display: flex;
  flex-direction: column;
  justify-content: space-between;
}
.panel {
  width: 300px;
  height: 25px;
  display: flex;
  align-items: center;
  padding: 0 1px 0 4px;
  background: #f2f2f2;
  border: 1px solid #c4c4c4;
  color: #555;
}
.panel h2 { font-size: 11px; flex: 1; margin-left: 8px; }
.comments { border-top: 0; padding-left: 16px; }
.grip { width: 3px; height: 11px; margin-left: 7px; border: solid #777; border-width: 0 1px; }
.tree { padding-top: 3px; font: 11px/16px "Liberation Sans", sans-serif; }
.tree li { display: flex; align-items: center; height: 24px; padding-left: 36px; gap: 8px; }
.tree li.root { padding-left: 16px; gap: 7px; }
.chip { display: flex; align-items: center; height: 20px; gap: 9px; padding: 0 8px 0 3px; background: #f2f2f2; }
.chip > span { margin-left: 5px; }
.root .chip { gap: 6px; }
.root .chip .sel { display: flex; align-items: center; gap: 13px; height: 16px; margin: 0; padding: 0 5px 0 3px; background: #999; color: #fff; }
.chip input {
  appearance: none;
  width: 13px;
  height: 13px;
  margin: 0;
  border: 1px solid #222;
  border-radius: 50%;
  background: radial-gradient(#222 0 2px, #fff 3px);
}
.off { opacity: .3; }
.bottomrow { display: grid; grid-template-columns: 1fr auto 1fr; align-items: end; }
.navbar { display: flex; align-items: center; height: 24px; gap: 7px; padding: 0 6px 0 2px; background: #f2f2f2; }
.navbar .menu::after { margin-left: 1px; border-width: 4px 3px 0; }
.navbar .menu { margin-right: -2px; }
.navbar .wide::after { margin-left: 5px; }

.timeline { display: flex; flex: none; height: 50px; padding-left: 10px; border-top: 2px solid #ccc; }
.playback { display: flex; align-items: center; gap: 11px; margin-right: 18px; }
.features { display: flex; padding-top: 14px; }
.features li { width: 24px; display: flex; flex-direction: column; align-items: center; gap: 2px; }
.features li::after {
  content: "";
  width: 24px;
  height: 6px;
  background: linear-gradient(#ccc, #ccc) center / 2px 6px no-repeat, linear-gradient(#ccc, #ccc) bottom / 24px 2px no-repeat;
}
.features li:first-child::after { width: 13px; margin-left: 11px; background-position: left, bottom; }
.features li:last-child::after { width: 13px; margin-right: 11px; background-position: right, bottom; }
.marker { margin: 9px 0 0 -6px; }
.settings { margin: 0 13px 0 auto; }

.taskbar { display: flex; flex: none; height: 40px; background: #1d1d1d; color: #fff; }
.start { width: 48px; }
.search {
  display: flex;
  align-items: center;
  gap: 11px;
  width: 344px;
  padding-left: 11px;
  background: #f2f2f2;
  border: 1px solid #bbb;
}
.search input { flex: 1; border: 0; padding: 0; background: none; font: 14px/20px "Noto Sans", sans-serif; color: #222; }
.search input::placeholder { color: #222; opacity: 1; }
.apps { display: flex; gap: 1px; }
.apps button { width: 48px; }
.apps .running { background: linear-gradient(#e66ab5, #e66ab5) bottom / 40px 2px no-repeat; }
.apps .current { background: linear-gradient(#e66ab5, #e66ab5) bottom / 100% 2px no-repeat #4a4a4a; }
.tray { display: flex; align-items: center; gap: 9px; margin-left: auto; font: 11px/18px "Noto Sans", sans-serif; }
.clock { display: flex; flex-direction: column; align-items: center; width: 72px; }
.notify { margin: 0 10px 0 2px; }
.peek { align-self: stretch; width: 5px; border-left: 1px solid #777; }
```
